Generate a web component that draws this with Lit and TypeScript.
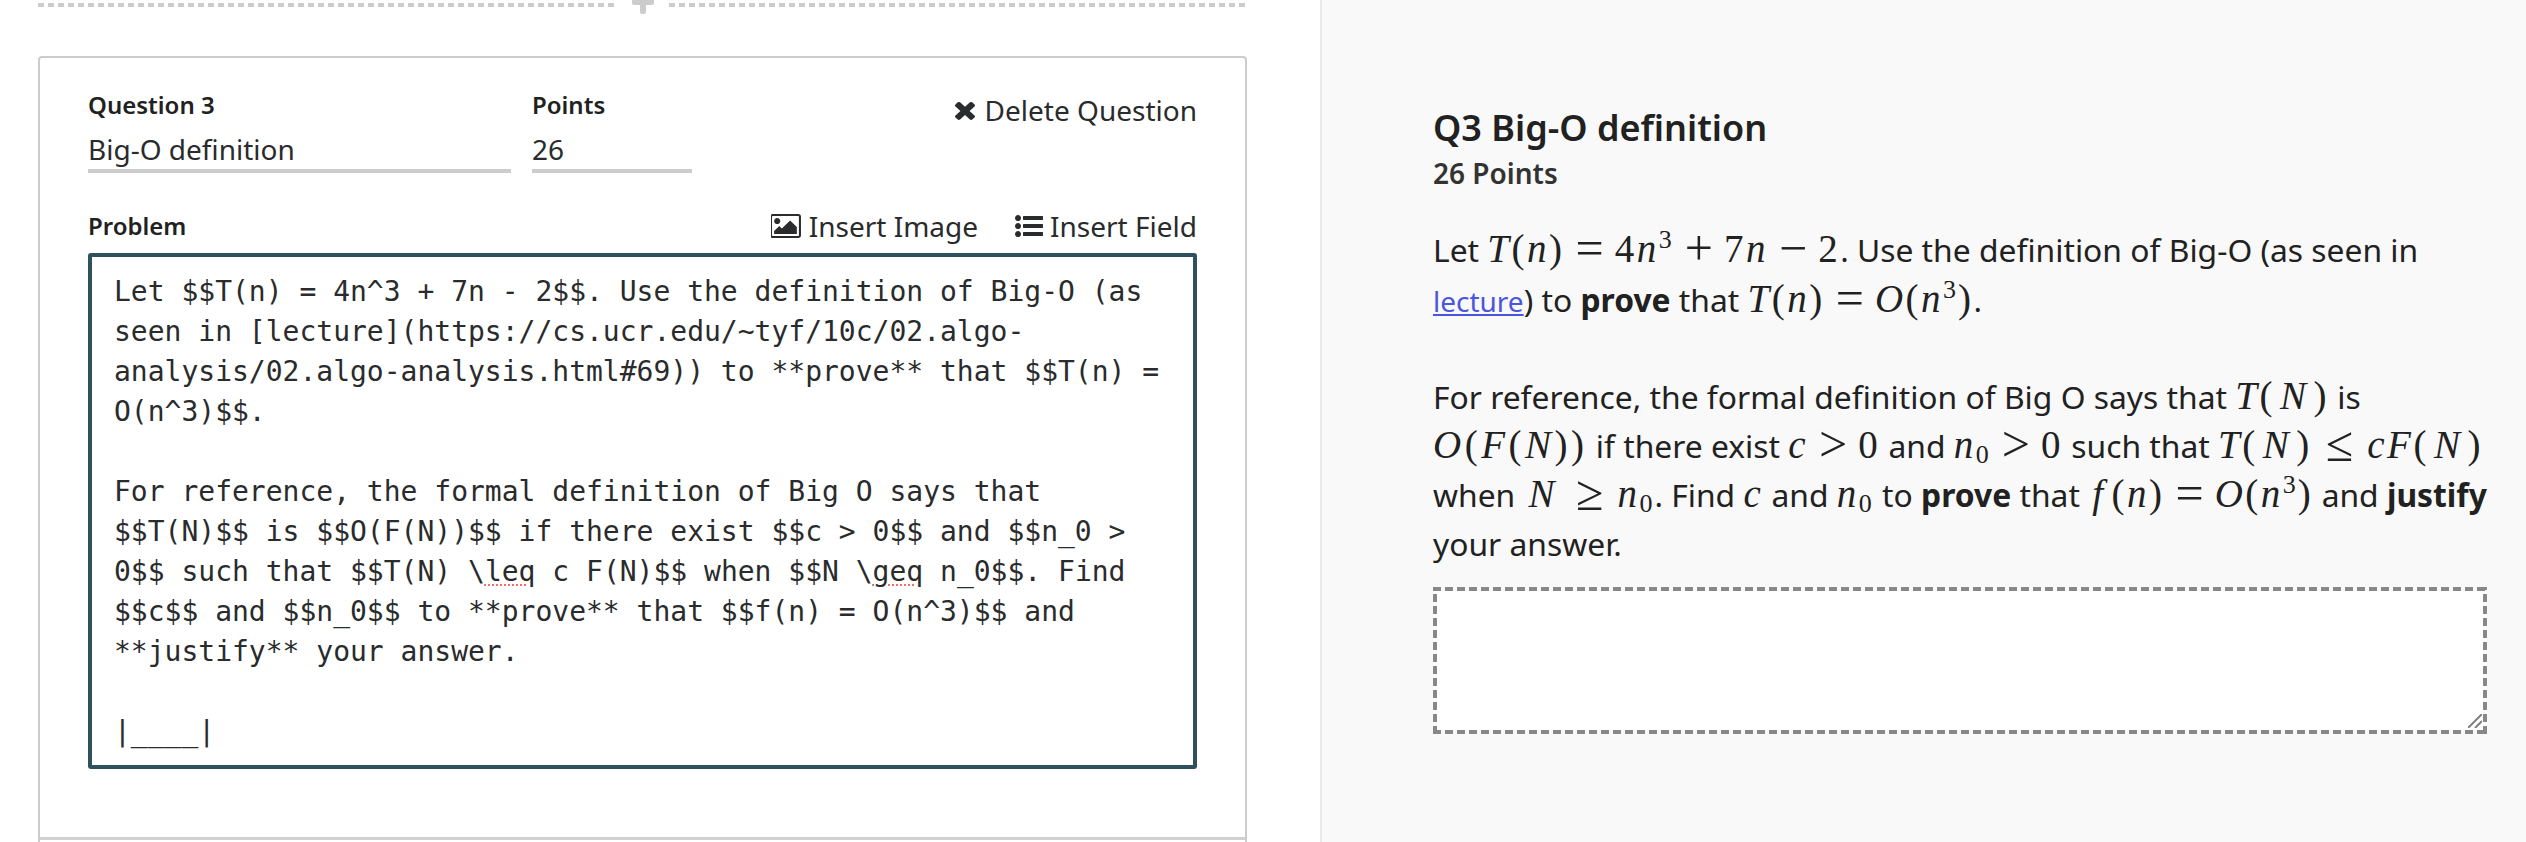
import { LitElement, html, css } from "lit";
import { customElement } from "lit/decorators.js";

const X = "M1490 1322q0 40-28 68l-136 136q-28 28-68 28t-68-28l-294-294-294 294q-28 28-68 28t-68-28l-136-136q-28-28-28-68t28-68l294-294-294-294q-28-28-28-68t28-68l136-136q28-28 68-28t68 28l294 294 294-294q28-28 68-28t68 28l136 136q28 28 28 68t-28 68l-294 294 294 294q28 28 28 68z";
const PIC = "M576 576q0 80-56 136t-136 56-136-56-56-136 56-136 136-56 136 56 56 136zm1024 384v448h-1408v-192l320-320 160 160 512-512zm96-704h-1600q-13 0-22.5 9.5t-9.5 22.5v1216q0 13 9.5 22.5t22.5 9.5h1600q13 0 22.5-9.5t9.5-22.5v-1216q0-13-9.5-22.5t-22.5-9.5zm160 32v1216q0 66-47 113t-113 47h-1600q-66 0-113-47t-47-113v-1216q0-66 47-113t113-47h1600q66 0 113 47t47 113z";
const LIST = "M384 1408q0 80-56 136t-136 56-136-56-56-136 56-136 136-56 136 56 56 136zm0-512q0 80-56 136t-136 56-136-56-56-136 56-136 136-56 136 56 56 136zm1408 416v192q0 13-9.5 22.5t-22.5 9.5h-1216q-13 0-22.5-9.5t-9.5-22.5v-192q0-13 9.5-22.5t22.5-9.5h1216q13 0 22.5 9.5t9.5 22.5zm-1408-928q0 80-56 136t-136 56-136-56-56-136 56-136 136-56 136 56 56 136zm1408 416v192q0 13-9.5 22.5t-22.5 9.5h-1216q-13 0-22.5-9.5t-9.5-22.5v-192q0-13 9.5-22.5t22.5-9.5h1216q13 0 22.5 9.5t9.5 22.5zm0-512v192q0 13-9.5 22.5t-22.5 9.5h-1216q-13 0-22.5-9.5t-9.5-22.5v-192q0-13 9.5-22.5t22.5-9.5h1216q13 0 22.5 9.5t9.5 22.5z";

@customElement("app-root")
export class AppRoot extends LitElement {
  static styles = css`
    :host { display: block; width: 2526px; height: 842px; overflow: hidden; background: #fff; color: #292b2c; font-family: "Noto Sans", sans-serif; font-size: 28px; line-height: 49px; }
    * { box-sizing: border-box; }
    .page { display: flex; height: 842px; }
    .left { width: 1320px; padding: 0 73px 0 38px; flex: none; }
    .adder { display: flex; align-items: flex-start; height: 56px; }
    .dash { flex: 1; height: 4px; margin-top: 3px; background: repeating-linear-gradient(90deg, #ccc 0 6px, transparent 6px 10px); }
    .plus { width: 22px; height: 14px; position: relative; flex: none; margin: 0 15px 0 16px; }
    .plus::before { content: ""; position: absolute; left: 0; top: 0; width: 22px; height: 5px; background: #ccc; border-radius: 0 0 2px 2px; }
    .plus::after { content: ""; position: absolute; left: 8px; top: 0; width: 6px; height: 14px; background: #ccc; border-radius: 0 0 2px 2px; }
    .card { border: 2px solid #ccc; border-radius: 4px; padding: 27px 48px 0; height: 800px; }
    .head { display: flex; }
    .f1 { width: 423px; margin-right: 21px; }
    .f2 { width: 160px; }
    .lbl { font-size: 24px; font-weight: 600; line-height: 40px; color: #212121; }
    .val { line-height: 48px; height: 48px; border-bottom: 4px solid #ccc; }
    .del { margin-left: auto; display: flex; align-items: center; height: 40px; gap: 10px; margin-top: 5px; }
    .row2 { display: flex; align-items: center; margin-top: 32px; height: 42px; }
    .spacer { flex: 1; }
    .tool { display: flex; align-items: center; gap: 7px; }
    .tool + .tool { margin-left: 37px; }
    svg { fill: #292b2c; display: block; }
    .box { margin-top: 6px; border: 4px solid #2f515c; border-radius: 3px; height: 516px; padding: 15px 22px; font-family: "DejaVu Sans Mono", monospace; line-height: 40px; white-space: pre; }
    .ml { height: 40px; }
    .sp { text-decoration: underline dotted #f56c6c; text-decoration-thickness: 2px; text-underline-offset: 3px; }
    .foot { margin: 68px -48px 0; border-top: 3px solid #d0d0d0; }
    .right { flex: 1; background: #f9f9f9; border-left: 2px solid #e8eaf0; padding: 103px 39px 0 111px; }
    h1 { margin: 0; font-size: 36px; line-height: 50px; font-weight: 600; color: #212121; }
    .pts { font-size: 28px; font-weight: 600; line-height: 38px; color: #333; margin-top: 1px; }
    .p1, .p2 { font-size: 31.8px; color: #212121; }
    .p1 { margin-top: 33px; line-height: 50px; }
    .p2 { margin-top: 46px; line-height: 49px; }
    .ln { white-space: nowrap; }
    a { color: #4a55e0; text-decoration: underline; font-size: 28px; }
    b { font-weight: 700; }
    .m { font-family: "Liberation Serif", serif; font-size: 39px; letter-spacing: 2.5px; white-space: nowrap; line-height: 0; }
    .m i { font-style: italic; }
    .m sup { font-size: 26px; letter-spacing: 0; line-height: 0; vertical-align: 14px; margin-right: 2px; }
    .m sub { font-size: 26px; letter-spacing: 0; line-height: 0; vertical-align: -5px; margin-right: 2px; }
    .o { font-size: 50px; letter-spacing: 0; margin: 0 11px; line-height: 0; vertical-align: -3px; }
    .r { margin: 0 14px; }
    .m .N { padding: 0 5px; }
    .m .f { padding: 0 6px 0 4px; }
    .ofn { letter-spacing: 3.5px; }
    .ans { position: relative; margin-top: 19px; width: 1054px; height: 147px; padding: 4px; --d: #888; background:
      repeating-linear-gradient(90deg, var(--d) 0 8px, transparent 8px 12px) top left / 100% 4px no-repeat,
      repeating-linear-gradient(90deg, var(--d) 0 8px, transparent 8px 12px) bottom left / 100% 4px no-repeat,
      repeating-linear-gradient(0deg, var(--d) 0 8px, transparent 8px 12px) top left / 4px 100% no-repeat,
      repeating-linear-gradient(0deg, var(--d) 0 8px, transparent 8px 12px) top right / 4px 100% no-repeat; }
    textarea { display: block; width: 100%; height: 100%; background: #fff; border: none; resize: none; outline: none; }
    .grip { position: absolute; right: 5px; bottom: 6px; stroke: #808080; stroke-width: 2; fill: none; }
  `;

  private m(c: unknown) { return html`<span class="m">${c}</span>`; }

  render() {
    const n0 = this.m(html`<i>n</i><sub>0</sub>`);
    const o = (s: string) => html`<span class="o">${s}</span>`;
    const r = (s: string) => html`<span class="o r">${s}</span>`;
    const N = html`<i class="N">N</i>`;
    const mono = [
      html`Let $$T(n) = 4n^3 + 7n - 2$$. Use the definition of Big-O (as`,
      html`seen in [lecture](https://cs.ucr.edu/~tyf/10c/02.algo-`,
      html`analysis/02.algo-analysis.html#69)) to **prove** that $$T(n) =`,
      html`O(n^3)$$.`,
      html``,
      html`For reference, the formal definition of Big O says that`,
      html`$$T(N)$$ is $$O(F(N))$$ if there exist $$c > 0$$ and $$n_0 >`,
      html`0$$ such that $$T(N) \\<span class="sp">leq</span> c F(N)$$ when $$N \\<span class="sp">geq</span> n_0$$. Find`,
      html`$$c$$ and $$n_0$$ to **prove** that $$f(n) = O(n^3)$$ and`,
      html`**justify** your answer.`,
      html``,
      html`|____|`,
    ];
    return html`<div class="page">
      <div class="left">
        <div class="adder"><div class="dash"></div><div class="plus"></div><div class="dash"></div></div>
        <div class="card">
          <div class="head">
            <div class="f1"><div class="lbl">Question 3</div><div class="val">Big-O definition</div></div>
            <div class="f2"><div class="lbl">Points</div><div class="val">26</div></div>
            <div class="del"><svg width="20" height="20" viewBox="302 238 1188 1316" preserveAspectRatio="none"><path d="${X}"/></svg><span>Delete Question</span></div>
          </div>
          <div class="row2">
            <div class="lbl">Problem</div><div class="spacer"></div>
            <div class="tool"><svg width="31" height="24" viewBox="0 128 1920 1536" preserveAspectRatio="none"><path d="${PIC}"/></svg><span>Insert Image</span></div>
            <div class="tool"><svg width="28" height="22" viewBox="0 192 1792 1408" preserveAspectRatio="none"><path d="${LIST}"/></svg><span>Insert Field</span></div>
          </div>
          <div class="box">${mono.map((l) => html`<div class="ml">${l}</div>`)}</div>
          <div class="foot"></div>
        </div>
      </div>
      <div class="right">
        <h1>Q3 Big-O definition</h1>
        <div class="pts">26 Points</div>
        <div class="p1">
          <div class="ln">Let ${this.m(html`<i>T</i>(<i>n</i>)${o("=")}4<i>n</i><sup>3</sup>${o("+")}7<i>n</i>${o("−")}2`)}. Use the definition of Big-O (as seen in</div>
          <div class="ln"><a>lecture</a>) to <b>prove</b> that ${this.m(html`<i>T</i>(<i>n</i>)${o("=")}<i>O</i>(<i>n</i><sup>3</sup>)`)}.</div>
        </div>
        <div class="p2">
          <div class="ln">For reference, the formal definition of Big O says that ${this.m(html`<i>T</i>(${N})`)} is</div>
          <div class="ln"><span class="m ofn"><i>O</i>(<i>F</i>(<i>N</i>))</span> if there exist ${this.m(html`<i>c</i>${o(">")}0`)} and ${this.m(html`<i>n</i><sub>0</sub>${o(">")}0`)} such that ${this.m(html`<i>T</i>(${N})${r("≤")}<i>cF</i>(${N})`)}</div>
          <div class="ln">when ${this.m(html`${N}${r("≥")}<i>n</i><sub>0</sub>`)}. Find ${this.m(html`<i>c</i>`)} and ${n0} to <b>prove</b> that ${this.m(html`<i class="f">f</i>(<i>n</i>)${o("=")}<i>O</i>(<i>n</i><sup>3</sup>)`)} and <b>justify</b></div>
          <div class="ln">your answer.</div>
        </div>
        <div class="ans"><textarea aria-label="Answer"></textarea><svg class="grip" width="14" height="14" viewBox="0 0 14 14"><path d="M0 14 14 0M7 14 14 7"/></svg></div>
      </div>
    </div>`;
  }
}
